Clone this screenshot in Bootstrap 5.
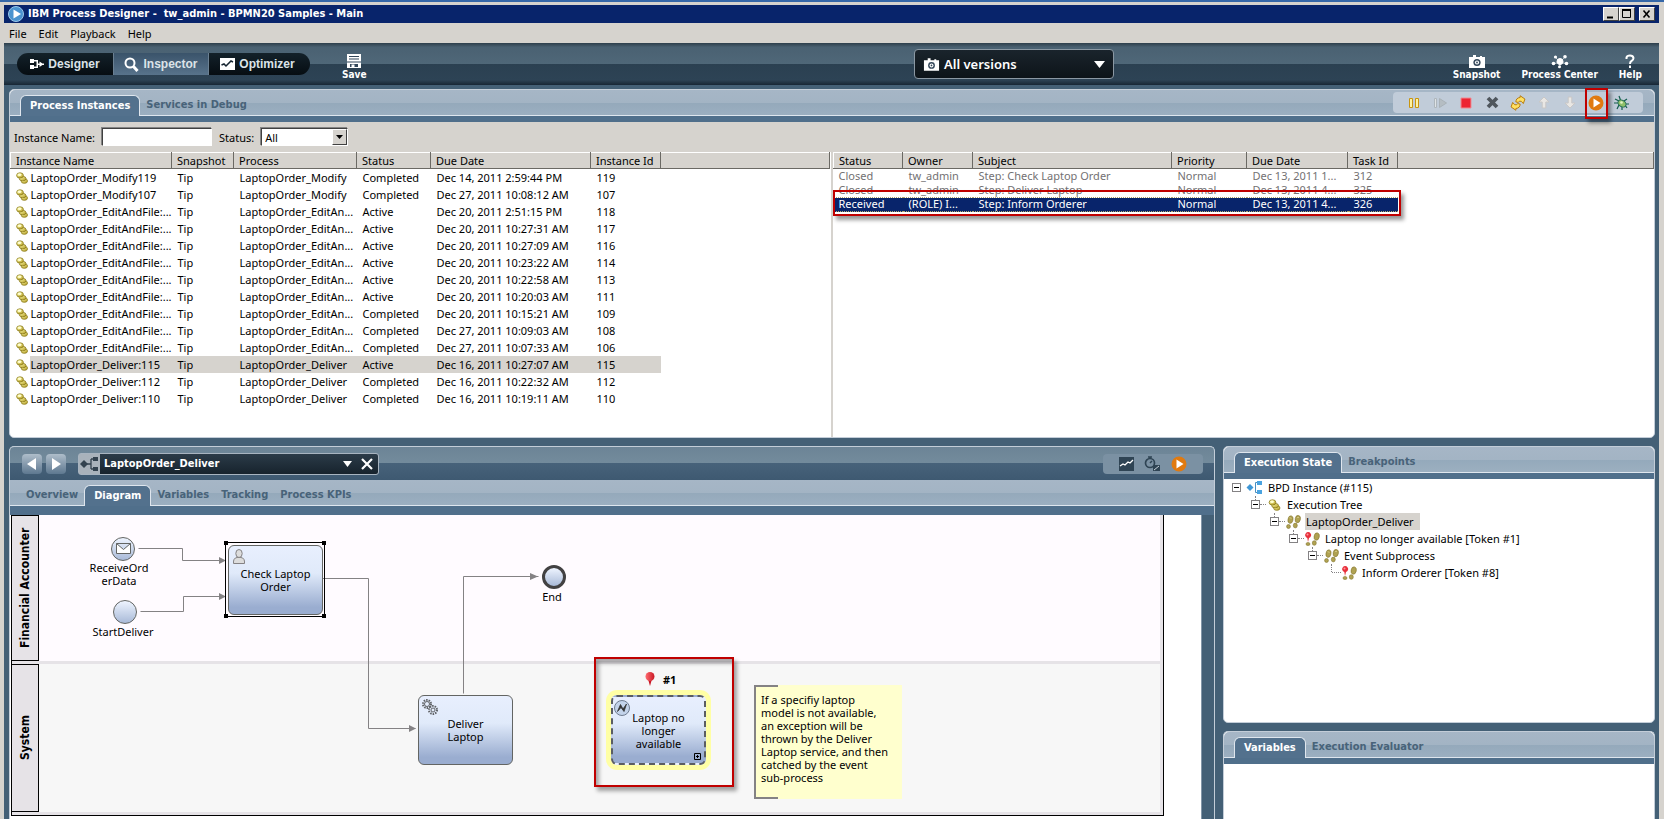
<!DOCTYPE html>
<html lang="en">
<head>
<meta charset="utf-8">
<meta name="viewport" content="width=device-width, initial-scale=1">
<title>IBM Process Designer</title>
<link href="https://cdn.jsdelivr.net/npm/bootstrap@5.3.0/dist/css/bootstrap.min.css" rel="stylesheet">
<style>
:root{--ui:"Noto Sans",Tahoma,sans-serif;--strong:"DejaVu Sans Condensed","DejaVu Sans",Verdana,sans-serif;--face:#d6d3ce;--steel:#446076;--tab:#53718d}
body{font-family:var(--ui);font-size:11px;line-height:13px;color:#000;background:var(--steel);overflow:hidden}
svg{display:block;flex:none}
button{font:inherit}
.shell{border:4px solid var(--face);border-bottom:0;border-top-width:3px;border-right-width:5px;min-height:0}
.desk{height:2px;background:#3567a8;flex:none}
.titlebar{height:18px;background:#08246b;color:#fff;font:700 11px/18px var(--strong);white-space:pre}
.winbtn{width:16px;height:14px;background:var(--face);border:1px solid;border-color:#fff #404040 #404040 #fff;padding:0}
.menubar{height:20px;background:var(--face);gap:12px;padding-left:5px}
.menubar a{color:#000;text-decoration:none}
.topbar{height:42px;background:linear-gradient(#2e3f4b 0,#4a6172 10%,#4f6778 49%,#2b4051 50%,#2d4355 88%,#172634 100%);color:#fff}
.modes{background:linear-gradient(#13212a,#060d12);border-radius:11px;height:22px;width:293px;margin:0 32px 0 13px;overflow:hidden}
.modes button{border:0;background:none;color:#dce3e8;font:700 12px/22px "Liberation Sans",Arial,sans-serif;padding:0;flex:0 0 96px}
.modes button:last-child{flex:1 0 0}
.modes button.on{background:linear-gradient(#3a536a,#58738b);border:solid #6b8092;border-width:0 1px}
.tool{border:0;background:none;color:#fff;font:700 10px/12px var(--strong);padding:6px 0 0}
.righttools{width:545px;gap:21px;padding-right:17px}
.vers{width:200px;height:30px;background:linear-gradient(#1a242c,#0d1419);border:1px solid #8b98a3;border-radius:4px;color:#fff;font-weight:600;font-size:13px}
.pane{border:1px solid #c3cdd8;border-radius:5px;background:#fff}
.work{padding:4px 0 0 5px;min-height:0}
.strip{height:26px;background:linear-gradient(#a6b6c6 0,#a3b4c4 50%,#94a9bb 51%,#9cafc0 100%);border-radius:5px 5px 0 0;border-bottom:1px solid #dfe6ee;padding-left:10px}
.strip button{border:0;background:none;color:#486379;font:700 11px/20px var(--strong);height:20px;padding:0 6px}
.strip button.on{background:var(--tab);color:#fff;border:1px solid #dfe6ee;border-bottom:0;border-radius:6px 6px 0 0;padding:0 9px;height:21px;margin-bottom:-1px}
.bar6{height:6px;background:#506f8b;flex:none}
.tools{background:#c1ccd9;border-radius:4px;height:21px;margin-right:11px}
.tools button{border:0;background:none;padding:0;width:26px}
.filter{background:var(--face);height:30px;gap:7px;padding-left:4px}
.field{height:18px;border:1px solid;border-color:#404040 #fff #fff #404040;box-shadow:-1px -1px 0 #848484;border-radius:0;background:#fff;padding:0 3px;font:inherit;min-height:0}
select.pick{appearance:none;width:87px}
.arrowbox{position:absolute;right:1px;top:1px;width:15px;height:16px;background:var(--face);border:1px solid;border-color:#fff #404040 #404040 #fff;pointer-events:none}
.listing{table-layout:fixed;--bs-table-bg:transparent;font-size:11px;margin:0;color:#000}
.listing th,.listing td{padding:0 0 0 6px;white-space:nowrap;color:inherit}
.listing th{font-weight:400;height:16px;line-height:14px;background:var(--face);border:1px solid;border-color:#fff #6b6964 #6b6964 #fff;padding-left:5px}
.listing td{line-height:17px;height:17px}
.listing td:first-child{padding-left:5px}
.namecell{gap:3px}
.listing tr.sel td{background:var(--face)}
.listing tr.sel td:first-child{background:linear-gradient(90deg,#fff 19px,var(--face) 19px)}
.listing tr.sel td:last-child{background:#fff}
.tasks td{line-height:14px;height:14px;color:#737173}
.tasks tr.cur td{background:#08246b;color:#fff;line-height:12px;border:dotted #b5a56b;border-width:1px 0}
.tasks tr.cur td:last-child{background:#fff;border:0}
.callout{position:absolute;border:2px solid #c00000;box-shadow:3px 4px 4px rgba(0,0,0,.4);pointer-events:none;z-index:3}
.hollow{box-shadow:3px 4px 4px rgba(0,0,0,.35),inset 3px 4px 4px rgba(0,0,0,.35)}
.split{width:3px;background:var(--face);border-left:1px solid #fff;flex:none}
.leftlist{flex:0 0 820px}
.upper{height:349px;margin-right:4px}
.lower{min-height:0;margin-right:4px}
.flow{border-radius:5px 5px 0 0;border-bottom:0}
.nav0{height:33px;padding-left:12px;background:linear-gradient(#6c8496 0,#738b9c 48%,#47627a 50%,#3e5971 100%)}
.step{width:20px;height:20px;border:0;padding:0;background:linear-gradient(#aebdca,#5e7890);border-radius:4px}
.doc{width:301px;height:22px;margin-left:12px;border:1px solid #a8b4c0;border-radius:3px;background:linear-gradient(#2b3b48,#17232d);color:#fff;font:700 11px/18px var(--strong)}
.mini{background:#7b91a3;border-radius:4px;height:20px;width:100px;gap:10px;margin-right:11px}
.bar9{height:9px}
.board{background:#fff;overflow:hidden;border-right:0;min-height:0;padding-left:1px}
.pool{border-right:1px solid #000;border-bottom:1px solid #000;flex:0 0 1153px;height:301px;border-left:1px solid #000}
.lane{border-right:3px solid #e6e3e7;border-bottom:3px solid #e6e3e7;height:149px}
.lane+.lane{height:151px;background:#f7f7f7}
.lane{background:#fffbff}
.lane h2{width:27px;margin:0;background:#e6e3e7;border:1px solid #000;border-right:0;font:700 12px/26px var(--strong);writing-mode:vertical-rl;transform:rotate(180deg);text-align:center}
.edges{position:absolute;left:0;top:0}
.item{position:absolute;text-align:center;font-size:11px;line-height:13px}
.task{width:95px;height:70px;border:1px solid #636563;border-radius:6px;background:linear-gradient(#e8effe 0,#e0eafa 40%,#9aadd0 90%);display:flex;align-items:center;justify-content:center}
.task svg{position:absolute;left:3px;top:3px}
.event{width:24px;height:24px;border:1px solid #636563;border-radius:50%;background:linear-gradient(#eef4ff,#a9bad8);display:flex;align-items:center;justify-content:center}
.memo{background:#ffffce;width:148px;height:114px;text-align:left;padding:8px 7px}
.memo::before{content:"";position:absolute;left:0;top:0;width:24px;height:114px;border:2px solid #848284;border-right:0}
.rail{width:13px;background:var(--steel);border-left:1px solid #8396a8}
.side{width:432px;flex:none}
.state{height:277px}
.tree,.tree ul{list-style:none;margin:0;padding:0}
.tree{padding-left:8px}
.tree ul{padding-left:19px}
.tree .rowx{height:17px;gap:5px;white-space:nowrap;position:relative}
.tree .box{width:9px;height:9px;border:1px solid #848284;background:#fff;position:relative;flex:none}
.tree .box::after{content:"";position:absolute;left:1px;right:1px;top:3px;height:1px;background:#000}
.tree .dots{width:6px;border-top:1px dotted #848284;margin:0 -4px 0 -5px}
.tree ul .rowx::before{content:"";position:absolute;left:4px;top:0;height:4px;border-left:1px dotted #848284}
.tree .leaf{width:9px;border-top:1px dotted #848284;margin:0 -4px 0 5px}
.tree ul .end::before{height:8px}
.tree .hot{background:var(--face);padding:2px 6px 2px 1px;margin-left:-1px}
</style>
</head>
<body class="vh-100 d-flex flex-column">
<svg width="0" height="0" class="position-absolute">
<defs>
<linearGradient id="gold" x1="0" y1="0" x2="1" y2="1"><stop offset="0" stop-color="#ffffb0"/><stop offset="1" stop-color="#b39a1e"/></linearGradient>
<symbol id="coins" viewBox="0 0 12 12"><g fill="url(#gold)" stroke="#8a7a1c" stroke-width=".8"><ellipse cx="8.300" cy="9" rx="3.200" ry="2.300"/><ellipse cx="6.600" cy="6.600" rx="3.400" ry="2.200"/><ellipse cx="4" cy="3.400" rx="3.400" ry="2.600"/></g><ellipse cx="3.600" cy="2.800" rx="1.900" ry="1.200" fill="#ffffd0"/></symbol>
<symbol id="steps" viewBox="0 0 15 14"><g fill="#b0a252" stroke="#857730" stroke-width=".6"><ellipse cx="4.500" cy="4.600" rx="2.500" ry="3.800" transform="rotate(12 4.500 4.600)"/><ellipse cx="2.500" cy="11.500" rx="1.900" ry="2"/><ellipse cx="11.800" cy="4" rx="2.600" ry="3.700" transform="rotate(12 11.500 4)"/><ellipse cx="9.300" cy="10.500" rx="2" ry="2.400"/></g><path d="M4 2.500l1 1M11.500 2l1 1" stroke="#f4ecb0"/></symbol>
<symbol id="pinsteps" viewBox="0 0 15 14"><g fill="#b0a252" stroke="#857730" stroke-width=".6"><ellipse cx="3" cy="12" rx="2" ry="1.500"/><ellipse cx="11.800" cy="4.500" rx="2.600" ry="3.700" transform="rotate(12 11.500 4)"/><ellipse cx="9.300" cy="11" rx="2" ry="2.300"/></g><path d="M3 10 2.300 6A3 3 0 1 1 4 6z" fill="#e8303c"/><circle cx="2.500" cy="2.500" r="1" fill="#ff9aa0"/></symbol>
<symbol id="cam" viewBox="0 0 18 13"><path fill="#fff" d="M1 2h4V0h3v2h4V1h2v1h3v11H1z"/><circle cx="9" cy="7.500" r="3.600" fill="#33475a"/><circle cx="9" cy="7.500" r="2.100" fill="#fff"/><circle cx="9" cy="7.500" r=".9" fill="#33475a"/></symbol>
<symbol id="play" viewBox="0 0 16 16"><circle cx="8" cy="8" r="7.500" fill="#e07a10"/><path d="M5.500 3.500 12.500 8l-7 4.500z" fill="#fff"/></symbol>
<symbol id="chart" viewBox="0 0 15 13"><path d="M1 9l3-2 2 1 3-3 2 1 3-3" fill="none" stroke="#fff" stroke-width="1.300"/></symbol>
<linearGradient id="redball"><stop offset="0" stop-color="#ff6b70"/><stop offset="1" stop-color="#c81824"/></linearGradient>
</defs></svg>
<div class="desk"></div>
<div class="shell flex-grow-1 d-flex flex-column">
<header class="titlebar d-flex align-items-center justify-content-between px-1">
<div class="d-flex align-items-center gap-1"><svg width="16" height="16" viewBox="0 0 16 16"><circle cx="8" cy="8" r="7.500" fill="#4a93cf" stroke="#9cc8ea"/><path d="M5.500 3.500 13 8l-7.500 4.500z" fill="#fff"/></svg><span>IBM Process Designer -  tw_admin - BPMN20 Samples - Main</span></div>
<div class="d-flex">
<button class="winbtn" aria-label="Minimize"><svg width="14" height="12"><path d="M3 9.500h6" stroke="#000" stroke-width="2"/></svg></button>
<button class="winbtn" aria-label="Maximize"><svg width="14" height="12"><path d="M2.500 2v7.500h8V2z" fill="none" stroke="#000"/><path d="M2 2h9" stroke="#000" stroke-width="2"/></svg></button>
<button class="winbtn ms-1" aria-label="Close"><svg width="14" height="12"><path d="M3.500 2.500l6 7M9.500 2.500l-6 7" stroke="#000" stroke-width="1.600"/></svg></button>
</div></header>
<nav class="menubar d-flex align-items-center"><a href="#">File</a><a href="#">Edit</a><a href="#">Playback</a><a href="#">Help</a></nav>
<div class="topbar d-flex align-items-center">
<div class="modes d-flex">
<button class="d-flex align-items-center justify-content-center gap-1"><svg width="14" height="12" viewBox="0 0 14 12" fill="#fff"><path d="M0 1h4v4H0zM0 7h4v4H0zM4 2h4v8H4v-1.500h2.500v-5H4zM7 5.500h7v1.500H7zM9.500 3.500l4 2.800-4 2.700z"/></svg>Designer</button>
<button class="on d-flex align-items-center justify-content-center gap-1"><svg width="15" height="15" viewBox="0 0 15 15" fill="none" stroke="#fff"><circle cx="6" cy="6" r="4.500" stroke-width="2"/><path d="M9.500 9.500l4 4.500" stroke-width="3"/></svg>Inspector</button>
<button class="d-flex align-items-center justify-content-center gap-1 pe-1"><svg width="15" height="12" viewBox="0 0 15 12"><path fill="#fff" d="M0 0h15v12H0z"/><path d="M1.500 7l2.500-1 2 2 5-5 2 1" fill="none" stroke="#152430" stroke-width="1.500"/></svg>Optimizer</button>
</div>
<button class="tool d-flex flex-column align-items-center"><svg width="14" height="15" viewBox="0 0 14 15"><path d="M0 0h14v14H0z" fill="#fff"/><path d="M2 2.500h10M2 5h10M0 8h14" stroke="#33475a" stroke-width="1.200"/><path d="M3 10h8v3H3z" fill="#33475a"/><path d="M4.500 10.500h3v2.500h-3z" fill="#fff"/></svg>Save</button>
<button class="vers d-flex align-items-center ms-auto px-2 gap-1"><svg width="17" height="13"><use href="#cam"/></svg>All versions<svg class="ms-auto" width="11" height="8"><path d="M0 1h11L5.500 8z" fill="#fff"/></svg></button>
<div class="righttools d-flex justify-content-end">
<button class="tool d-flex flex-column align-items-center"><svg width="18" height="15"><use href="#cam"/></svg>Snapshot</button>
<button class="tool d-flex flex-column align-items-center"><svg width="18" height="15" viewBox="0 0 18 13" fill="#fff" stroke="#fff"><path d="M9 7 4 2M9 7l5-5M9 7 2 9M9 7l7 2M9 7v5" stroke-width=".6"/><circle cx="9" cy="6.500" r="3"/><g stroke="none"><circle cx="4.500" cy="2" r="1.600"/><circle cx="14" cy="1.800" r="1.800"/><circle cx="2.500" cy="8.500" r="1.800"/><circle cx="15.500" cy="8.500" r="1.800"/><circle cx="8.500" cy="11.800" r="1.500"/></g></svg>Process Center</button>
<button class="tool d-flex flex-column align-items-center"><svg width="10" height="15" viewBox="0 0 10 14"><path d="M1.500 4.500V3Q2 1 5 1T8.500 3.500Q8.500 5.500 6.500 6.500 5 7.300 5 9.500M5 11v2.500" fill="none" stroke="#fff" stroke-width="2"/></svg>Help</button>
</div></div>
<main class="work flex-grow-1 d-flex flex-column gap-2">
<section class="pane upper d-flex flex-column flex-shrink-0">
<div class="strip d-flex align-items-end position-relative">
<button class="on">Process Instances</button><button>Services in Debug</button>
<div class="tools d-flex align-items-center align-self-center ms-auto px-2">
<button aria-label="Pause"><svg class="m-auto" width="12" height="12"><path d="M1.500 1.500h3v9h-3zM7.500 1.500h3v9h-3z" fill="#fff3a0" stroke="#c89410"/></svg></button>
<button aria-label="Step"><svg class="m-auto" width="14" height="12"><path d="M1.500 1.500h2v9h-2z" fill="#dfe3e6" stroke="#aeb6bc"/><path d="M6.500 1.500v9l7-4.500z" fill="#b5bdc3" stroke="#a9b1b7"/></svg></button>
<button aria-label="Stop"><svg class="m-auto" width="12" height="12"><path d="M1 1h10v10H1z" fill="#ed2433" stroke="#f08a92"/></svg></button>
<button aria-label="Remove"><svg class="m-auto" width="13" height="13"><path d="M2 2l9 9M11 2l-9 9" stroke="#4f565d" stroke-width="3.800"/></svg></button>
<button aria-label="Refresh"><svg class="m-auto" width="16" height="16" viewBox="0 0 15 15"><g fill="#ffe060" stroke="#b5780c" stroke-width=".9"><path d="M5.500 6.500Q5.500 2.800 9.500 2.300V.7L14 3.800 12.500 8l-1.800-2Q8.500 5 7.800 7z"/><path d="M9.500 8.500Q9.500 12.200 5.500 12.700v1.600L1 11.200 2.500 7l1.800 2Q6.500 10 7.200 8z"/></g></svg></button>
<button aria-label="Up"><svg class="m-auto" width="12" height="13"><path d="M6 1l5 5H7.800v6H4.200V6H1z" fill="#e9e7e4" stroke="#c9c7c6"/></svg></button>
<button aria-label="Down"><svg class="m-auto" width="12" height="13"><path d="M6 12l5-5H7.800V1H4.200v6H1z" fill="#e9e7e4" stroke="#c9c7c6"/></svg></button>
<button aria-label="Run"><svg class="m-auto" width="16" height="16"><use href="#play"/></svg></button>
<button aria-label="Debug"><svg class="m-auto" width="16" height="16" viewBox="0 0 16 16"><path d="M1 4l4 2M5 1l1.500 4M0 8h4M3 14l2-4M8 15v-4M13 13l-2-3M15 9h-4M13 4l-3 2" stroke="#125c4c" stroke-width="1.200" fill="none"/><ellipse cx="8" cy="8.500" rx="4.400" ry="3.100" transform="rotate(35 8 8.500)" fill="#8fc06a" stroke="#1c6a54"/><circle cx="7.500" cy="7.500" r="1.300" fill="#e6f5c8"/></svg></button>
</div>
<span class="callout" style="right:46px;top:-2px;width:23px;height:31px"></span>
</div>
<div class="bar6"></div>
<form class="filter d-flex align-items-center flex-shrink-0"><label for="iname">Instance Name:</label><input id="iname" class="field" style="width:110px"><label for="stat">Status:</label><span class="position-relative"><select id="stat" class="field pick"><option>All</option></select><span class="arrowbox"><svg width="13" height="14"><path d="M3 5h7L6.500 9z"/></svg></span></span></form>
<div class="d-flex flex-grow-1">
<div class="overflow-hidden leftlist">
<table class="table table-borderless listing w-100" id="inst"><colgroup><col style="width:161px"><col style="width:62px"><col style="width:123px"><col style="width:74px"><col style="width:160px"><col style="width:70px"><col></colgroup>
<thead><tr><th>Instance Name</th><th>Snapshot</th><th>Process</th><th>Status</th><th>Due Date</th><th>Instance Id</th><th></th></tr></thead><tbody></tbody></table></div>
<div class="split"></div>
<div class="flex-grow-1 position-relative overflow-visible">
<table class="table table-borderless listing w-100 tasks"><colgroup><col style="width:69px"><col style="width:70px"><col style="width:199px"><col style="width:75px"><col style="width:101px"><col style="width:50px"><col></colgroup>
<thead><tr><th>Status</th><th>Owner</th><th>Subject</th><th>Priority</th><th>Due Date</th><th>Task Id</th><th></th></tr></thead>
<tbody><tr><td>Closed</td><td>tw_admin</td><td>Step: Check Laptop Order</td><td>Normal</td><td>Dec 13, 2011 1...</td><td>312</td><td></td></tr>
<tr><td>Closed</td><td>tw_admin</td><td>Step: Deliver Laptop</td><td>Normal</td><td>Dec 13, 2011 4...</td><td>325</td><td></td></tr>
<tr class="cur"><td>Received</td><td>(ROLE) I...</td><td>Step: Inform Orderer</td><td>Normal</td><td>Dec 13, 2011 4...</td><td>326</td><td></td></tr></tbody></table>
<span class="callout" style="left:0;top:38px;width:568px;height:26px"></span>
</div></div>
</section>
<div class="lower flex-grow-1 d-flex gap-2">
<section class="pane flow flex-grow-1 d-flex flex-column overflow-hidden">
<div class="nav0 d-flex align-items-center flex-shrink-0">
<div class="d-flex gap-1"><button class="step" aria-label="Back"><svg width="20" height="20"><path d="M14 4v12L5 10z" fill="#fff"/></svg></button><button class="step" aria-label="Forward"><svg width="20" height="20"><path d="M6 4v12l9-6z" fill="#fff"/></svg></button></div>
<div class="doc d-flex align-items-center pe-1"><svg class="me-1" width="21" height="20" viewBox="0 0 21 20"><path d="M0 0h21v20H0z" fill="#a9b2bb"/><path d="M1 10l4-4 4 4-4 4z" fill="#33424f"/><path d="M8 10h4M12 5v10M12 5h3M12 15h3" stroke="#33424f" stroke-width="1.300" fill="none"/><path d="M14 3h5v4h-5zM14 13h5v4h-5z" fill="#33424f"/></svg>LaptopOrder_Deliver<svg class="ms-auto me-1" width="9" height="6"><path d="M0 0h9L4.500 6z" fill="#fff"/></svg><button class="border-0 bg-transparent p-0 ms-1" aria-label="Close"><svg width="14" height="14"><path d="M2 2l10 10M12 2L2 12" stroke="#fff" stroke-width="2.200"/></svg></button></div>
<div class="mini d-flex align-items-center justify-content-center ms-auto"><svg width="15" height="14"><path d="M0 0h15v14H0z" fill="#2f4454"/><use href="#chart" width="15" height="13"/></svg><svg width="17" height="16" viewBox="0 0 17 16"><circle cx="6" cy="7" r="4.500" fill="none" stroke="#2f4454" stroke-width="1.700"/><path d="M4 1h4M6 1v2M6 7l2-2" stroke="#2f4454" stroke-width="1.500"/><path d="M9 9h7v6H9z" fill="#2f4454"/><path d="M10 14l5-4" stroke="#c7d1d9"/></svg><svg width="16" height="16"><use href="#play"/></svg></div>
</div>
<div class="strip d-flex align-items-end rounded-0 flex-shrink-0"><button>Overview</button><button class="on">Diagram</button><button>Variables</button><button>Tracking</button><button>Process KPIs</button></div>
<div class="bar6 bar9"></div>
<div class="board d-flex flex-grow-1">
<div class="pool position-relative">
<div class="lane d-flex"><h2>Financial Accounter</h2></div><div class="lane d-flex"><h2>System</h2></div>
<svg class="edges" width="1150" height="300" fill="none" stroke="#848284"><path d="M126.500 33.500h44v12h43M128.500 96.500h43v-15h42M309.500 63.500h47v150h47M451.500 178.500v-117h75"/><g fill="#848284" stroke="none"><path d="M207 42l7 3.500-7 3.500zM207 78l7 3.500-7 3.500zM397 210l7 3.500-7 3.500zM518 58l8 3.500-8 3.500z"/></g></svg>
<div class="item event" style="left:99px;top:22px"><svg width="15" height="12" fill="#fff" stroke="#636563"><path d="M.5.500h14v10H.5zM.5.500l7 6 7-6"/></svg></div>
<div class="item" style="left:67px;top:46px;width:80px">ReceiveOrd<br>erData</div>
<div class="item event" style="left:101px;top:85px"></div>
<div class="item" style="left:71px;top:110px;width:80px">StartDeliver</div>
<svg class="edges" width="330" height="110"><path d="M213.500 27.500h99v74h-99z" fill="none" stroke="#000"/><path d="M212 26h4v4h-4zM310 26h4v4h-4zM212 99h4v4h-4zM310 99h4v4h-4z"/></svg>
<div class="item task" style="left:216px;top:30px"><svg width="14" height="16" fill="#ddd" stroke="#848284"><path d="M1.500 14.500Q1 9 5 8.500h4Q13 9 12.500 14.500z"/><ellipse cx="7" cy="4.500" rx="3.200" ry="4"/></svg>Check Laptop<br>Order</div>
<div class="item event" style="left:530px;top:50px;border:3px solid #424142"></div>
<div class="item" style="left:500px;top:75px;width:80px">End</div>
<div class="item task" style="left:406px;top:180px"><svg width="16" height="16" fill="none" stroke="#5f6266"><circle cx="5" cy="5" r="4" stroke-width="2" stroke-dasharray="1.500 1"/><circle cx="5" cy="5" r="2.500"/><circle cx="11" cy="11" r="4" stroke-width="2" stroke-dasharray="1.500 1"/><circle cx="11" cy="11" r="2"/></svg>Deliver<br>Laptop</div>
<span class="callout hollow" style="left:582px;top:142px;width:140px;height:130px"></span>
<div class="item d-flex align-items-center gap-2 fw-bold" style="left:633px;top:157px"><svg width="10" height="14"><path d="M5 14 3 7h4z" fill="#c81824"/><circle cx="5" cy="4.500" r="4.500" fill="url(#redball)"/></svg>#1</div>
<div class="item task" style="left:599px;top:180px;border:2px dashed #5a5d63;box-shadow:0 0 0 5px #ffffa5"><svg width="16" height="16" fill="#c3d3ea" stroke="#6f7c90" style="left:1px"><circle cx="8" cy="8" r="7.500"/><path d="M3.500 11.500 6.500 4.500 9 9l3.500-5-2.500 7.500-3-4z" fill="#333" stroke="#333" stroke-width=".8"/></svg><span>Laptop no<br>longer<br>available</span><svg width="7" height="7" style="left:auto;top:auto;right:3px;bottom:3px"><path d="M.5.500h6v6h-6zM2 3.500h3M3.500 2v3" fill="none" stroke="#000"/></svg></div>
<div class="item memo" style="left:742px;top:170px">If a specifiy laptop<br>model is not available,<br>an exception will be<br>thrown by the Deliver<br>Laptop service, and then<br>catched by the event<br>sub-process</div>
</div>
<div class="rail ms-auto"></div>
</div>
</section>
<div class="side d-flex flex-column gap-2">
<section class="pane state d-flex flex-column">
<div class="strip d-flex align-items-end flex-shrink-0"><button class="on">Execution State</button><button>Breakpoints</button></div><div class="bar6"></div>
<ul class="tree">
<li><div class="rowx d-flex align-items-center"><span class="box"></span><svg width="17" height="14" viewBox="0 0 17 14"><path d="M4 3l3.500 3.500L4 10 .5 6.500z" fill="#3f97d6"/><path d="M12 1.500H9.500v10H12" stroke="#4a8fc0" fill="none"/><path d="M11 0h5v4h-5zM11 9h5v4h-5z" fill="#4aa3e0"/></svg>BPD Instance (#115)</div>
<ul><li><div class="rowx d-flex align-items-center"><span class="box"></span><i class="dots"></i><svg width="15" height="12"><use href="#coins"/></svg>Execution Tree</div>
<ul><li><div class="rowx d-flex align-items-center"><span class="box"></span><i class="dots"></i><svg width="15" height="14"><use href="#steps"/></svg><span class="hot">LaptopOrder_Deliver</span></div>
<ul><li><div class="rowx d-flex align-items-center"><span class="box"></span><i class="dots"></i><svg width="15" height="14"><use href="#pinsteps"/></svg>Laptop no longer available [Token #1]</div>
<ul><li><div class="rowx d-flex align-items-center"><span class="box"></span><i class="dots"></i><svg width="15" height="14"><use href="#steps"/></svg>Event Subprocess</div>
<ul><li><div class="rowx end d-flex align-items-center"><span class="leaf"></span><svg width="15" height="14"><use href="#pinsteps"/></svg>Inform Orderer [Token #8]</div></li></ul></li></ul></li></ul></li></ul></li></ul></li></ul>
</section>
<section class="pane flow flex-grow-1"><div class="strip d-flex align-items-end"><button class="on">Variables</button><button>Execution Evaluator</button></div><div class="bar6"></div></section>
</div>
</div>
</main></div>
<script>
const rows=[["LaptopOrder_Modify119","LaptopOrder_Modify","Completed","Dec 14, 2011 2:59:44 PM"],["LaptopOrder_Modify107","LaptopOrder_Modify","Completed","Dec 27, 2011 10:08:12 AM"]];
const e="LaptopOrder_EditAndFile:...",p="LaptopOrder_EditAn...";
[["Active","Dec 20, 2011 2:51:15 PM",118],["Active","Dec 20, 2011 10:27:31 AM",117],["Active","Dec 20, 2011 10:27:09 AM",116],["Active","Dec 20, 2011 10:23:22 AM",114],["Active","Dec 20, 2011 10:22:58 AM",113],["Active","Dec 20, 2011 10:20:03 AM",111],["Completed","Dec 20, 2011 10:15:21 AM",109],["Completed","Dec 27, 2011 10:09:03 AM",108],["Completed","Dec 27, 2011 10:07:33 AM",106]].forEach(r=>rows.push([e,p,...r]));
[["Active","Dec 16, 2011 10:27:07 AM",115],["Completed","Dec 16, 2011 10:22:32 AM",112],["Completed","Dec 16, 2011 10:19:11 AM",110]].forEach(r=>rows.push(["LaptopOrder_Deliver:"+r[2],"LaptopOrder_Deliver",...r]));
document.querySelector("#inst tbody").innerHTML=rows.map(r=>{const id=r[4]||r[0].slice(-3);return `<tr${id==115?' class="sel"':''}><td><div class="namecell d-flex align-items-center"><svg width="12" height="12"><use href="#coins"/></svg>${r[0]}</div></td><td>Tip</td><td>${r[1]}</td><td>${r[2]}</td><td>${r[3]}</td><td>${id}</td><td></td></tr>`}).join("");
</script>
<script src="https://cdn.jsdelivr.net/npm/bootstrap@5.3.0/dist/js/bootstrap.bundle.min.js"></script>
</body>
</html>
